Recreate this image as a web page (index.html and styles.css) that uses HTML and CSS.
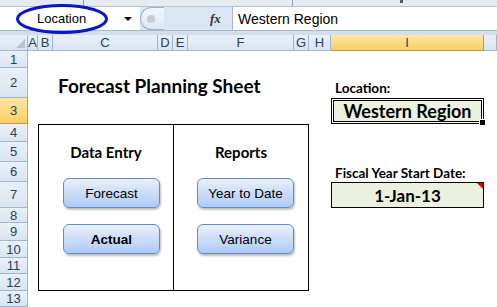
FILE: index.html
```html
<!DOCTYPE html>
<html lang="en">
<head>
    <meta charset="UTF-8">
    <title>Forecast Planning Sheet</title>
    <link rel="stylesheet" href="styles.css">
</head>
<body>
    <div class="page">
        <div class="ribbon-edge">
            <span class="edge-line first"></span>
            <span class="edge-line second"></span>
            <span class="edge-tick"></span>
        </div>

        <div class="formula-bar">
            <div class="name-box">
                <span class="name-text">Location</span>
                <span class="drop-arrow"></span>
            </div>
            <div class="bar-middle">
                <span class="grip"><span class="grip-dot"></span></span>
                <span class="fx">fx</span>
            </div>
            <div class="formula-input">Western Region</div>
        </div>

        <!-- hand drawn circle round the name box -->
        <svg class="circle-mark" width="96" height="32" viewBox="0 0 96 32">
            <ellipse cx="47" cy="16" rx="44.5" ry="13.5" fill="none" stroke="#0716c8" stroke-width="3"/>
        </svg>

        <div class="bar-gap"></div>

        <div class="sheet">
            <div class="col-head corner"><span class="corner-tri"></span></div>
            <div class="col-head">A</div>
            <div class="col-head">B</div>
            <div class="col-head">C</div>
            <div class="col-head">D</div>
            <div class="col-head">E</div>
            <div class="col-head">F</div>
            <div class="col-head">G</div>
            <div class="col-head">H</div>
            <div class="col-head active">I</div>
            <div class="col-head"></div>

            <div class="row-head">1</div>
            <div class="row-head">2</div>
            <div class="row-head active">3</div>
            <div class="row-head">4</div>
            <div class="row-head">5</div>
            <div class="row-head">6</div>
            <div class="row-head">7</div>
            <div class="row-head">8</div>
            <div class="row-head">9</div>
            <div class="row-head">10</div>
            <div class="row-head">11</div>
            <div class="row-head">12</div>
            <div class="row-head">13</div>

            <div class="sheet-title">Forecast Planning Sheet</div>

            <div class="menu-box">
                <div class="pane left">
                    <div class="pane-title">Data Entry</div>
                    <div class="macro-btn">Forecast</div>
                    <div class="macro-btn bold">Actual</div>
                </div>
                <div class="pane right">
                    <div class="pane-title">Reports</div>
                    <div class="macro-btn">Year to Date</div>
                    <div class="macro-btn">Variance</div>
                </div>
            </div>

            <div class="cell-label location-label">Location:</div>
            <div class="input-cell location-cell">
                Western Region
                <span class="fill-handle"></span>
            </div>

            <div class="cell-label fiscal-label">Fiscal Year Start Date:</div>
            <div class="input-cell date-cell">
                1-Jan-13
                <span class="comment-mark"></span>
            </div>
        </div>
    </div>
</body>
</html>
```

FILE: styles.css
```css
/* Reset default browser styles */
body, html {
    margin: 0;
    padding: 0;
    height: 100vh;
    overflow: hidden;
    background: #fff;
}

.page {
    position: relative;
    width: 497px;
    height: 307px;
    font-family: 'Liberation Sans', Arial, sans-serif;
}

/* bottom edge of the ribbon */
.ribbon-edge {
    position: relative;
    height: 6px;
    background: #e6ebf1;
    border-bottom: 1px solid #b6c3d3;
}

.edge-line {
    position: absolute;
    top: 0;
    width: 1px;
    height: 6px;
    background: #8fa2ba;
}

.edge-line.first {
    left: 83px;
}

.edge-line.second {
    left: 292px;
}

.edge-tick {
    position: absolute;
    left: 400px;
    top: 0;
    width: 3px;
    height: 3px;
    background: #4c5a6c;
}

/* formula bar */
.formula-bar {
    display: flex;
    height: 24px;
    border-bottom: 1px solid #a9b9cd;
    box-sizing: border-box;
}

.name-box {
    width: 140px;
    display: flex;
    align-items: center;
    background: #fff;
    box-sizing: border-box;
}

.name-text {
    font-size: 13px;
    color: #000;
    margin-left: 37px;
}

.drop-arrow {
    margin-left: 38px;
    width: 0;
    height: 0;
    border-left: 4px solid transparent;
    border-right: 4px solid transparent;
    border-top: 4px solid #111;
}

.bar-middle {
    width: 92px;
    display: flex;
    align-items: center;
    background: #dbe6f4;
}

.grip {
    width: 24px;
    height: 23px;
    border-radius: 12px 0 0 12px;
    border: 1px solid #9fb2c9;
    border-right: none;
    background: linear-gradient(#f3f7fc, #dde7f3);
    display: flex;
    align-items: center;
    padding-left: 6px;
    box-sizing: border-box;
}

.grip-dot {
    width: 8px;
    height: 8px;
    border-radius: 50%;
    background: #c3ccd7;
}

.fx {
    margin-left: 46px;
    font-family: 'Liberation Serif', serif;
    font-style: italic;
    font-weight: bold;
    font-size: 13px;
    color: #333;
}

.formula-input {
    flex: 1;
    display: flex;
    align-items: center;
    padding-left: 5px;
    font-size: 14px;
    color: #000;
    background: #fff;
    border-left: 1px solid #a9b9cd;
}

.circle-mark {
    position: absolute;
    left: 15px;
    top: 3px;
}

.bar-gap {
    height: 4px;
    background: #d3deec;
}

/* worksheet grid */
.sheet {
    display: grid;
    grid-template-columns: 28px 10px 15px 105px 15px 15px 106px 15px 22px 153px 1fr;
    grid-template-rows: 16px 17px 30px 26px 18px 20px 20px 26px 15px 18px 17px 16px 17px 16px;
    background: #fff;
}

.col-head, .row-head {
    display: flex;
    align-items: center;
    justify-content: center;
    box-sizing: border-box;
    background: linear-gradient(#eaf0f8, #dae4f1);
    border-right: 1px solid #9eb6ce;
    border-bottom: 1px solid #9eb6ce;
    font-size: 13px;
    color: #27415e;
}

.row-head {
    grid-column: 1;
}

.col-head.active, .row-head.active {
    background: linear-gradient(#fde7a6, #f8cf64);
    border-color: #c69845;
}

.corner {
    position: relative;
}

.corner-tri {
    position: absolute;
    right: 2px;
    bottom: 2px;
    width: 0;
    height: 0;
    border-left: 9px solid transparent;
    border-bottom: 9px solid #b3c1d1;
}

.sheet-title {
    grid-column: 4 / 9;
    grid-row: 3;
    align-self: end;
    padding-left: 5px;
    padding-bottom: 1px;
    font-family: 'Lato', 'Liberation Sans', sans-serif;
    font-weight: bold;
    font-size: 19px;
    color: #000;
}

/* box with the macro buttons */
.menu-box {
    grid-column: 3 / 9;
    grid-row: 5 / 14;
    display: flex;
    border: 1px solid #000;
}

.pane {
    display: flex;
    flex-direction: column;
    padding-top: 18px;
    box-sizing: border-box;
}

.pane.left {
    flex: 0 0 135px;
    border-right: 1px solid #000;
}

.pane.right {
    flex: 1;
}

.pane-title {
    text-align: center;
    font-family: 'Lato', 'Liberation Sans', sans-serif;
    font-weight: bold;
    font-size: 15px;
    line-height: 18px;
    color: #000;
    margin-bottom: 17px;
}

.macro-btn {
    width: 97px;
    height: 30px;
    margin-left: 24px;
    margin-bottom: 16px;
    display: flex;
    align-items: center;
    justify-content: center;
    box-sizing: border-box;
    border: 1px solid #5d8ad2;
    border-radius: 6px;
    background: linear-gradient(#e9f1fd, #c9dbf8 55%, #aecbf6);
    box-shadow: 1px 2px 2px rgba(0, 0, 0, 0.25);
    font-size: 13.5px;
    color: #000;
}

.pane.right .macro-btn {
    margin-left: 23px;
}

.macro-btn.bold {
    font-weight: bold;
}

/* labelled input cells */
.cell-label {
    grid-column: 10;
    align-self: end;
    padding-left: 4px;
    padding-bottom: 1px;
    font-family: 'Lato', 'Liberation Sans', sans-serif;
    font-weight: bold;
    font-size: 13.5px;
    color: #000;
}

.location-label {
    grid-row: 3;
    padding-bottom: 2px;
}

.fiscal-label {
    grid-row: 7;
}

.input-cell {
    grid-column: 10;
    position: relative;
    display: flex;
    align-items: center;
    justify-content: center;
    box-sizing: border-box;
    background: #ebf1de;
    font-family: 'Lato', 'Liberation Sans', sans-serif;
    font-weight: bold;
    color: #000;
}

.location-cell {
    grid-row: 4;
    border: 3px double #000;
    background-clip: padding-box;
    font-size: 18px;
}

.date-cell {
    grid-row: 8;
    border: 1px solid #000;
    font-size: 17px;
}

.fill-handle {
    position: absolute;
    right: -5px;
    bottom: -5px;
    width: 5px;
    height: 5px;
    background: #000;
    border: 1px solid #fff;
}

.comment-mark {
    position: absolute;
    top: 0;
    right: 0;
    width: 0;
    height: 0;
    border-left: 6px solid transparent;
    border-top: 6px solid #e00000;
}
```
